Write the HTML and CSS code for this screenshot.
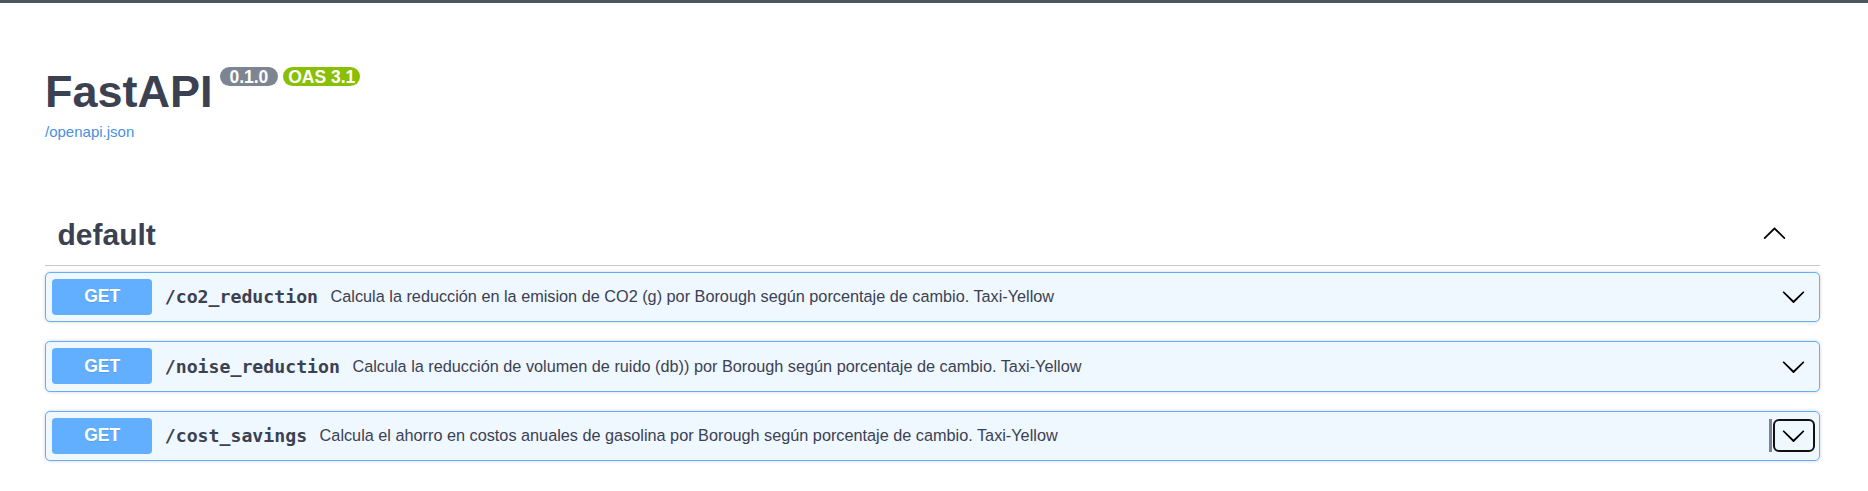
FILE: index.html
```html
<!DOCTYPE html>
<html lang="es">
<head>
<meta charset="utf-8">
<title>FastAPI - Swagger UI</title>
<link rel="stylesheet" href="styles.css">
</head>
<body>
<div class="topline"></div>
<div class="wrapper">
  <div class="info">
    <div class="main">
      <h2 class="title">FastAPI<span class="badge version"> 0.1.0 </span><span class="badge stamp">OAS 3.1</span></h2>
      <a class="url" href="#">/openapi.json</a>
    </div>
  </div>

  <section class="tag-section">
    <h3 class="tag">
      <span class="tag-name">default</span>
      <button class="expand" aria-label="collapse">
        <svg width="25" height="25" viewBox="0 0 20 20"><path d="M17.418 14.908c.272.268.709.268.979 0s.271-.701 0-.969l-7.908-7.83c-.27-.268-.707-.268-.979 0l-7.908 7.83c-.27.268-.27.701 0 .969.271.268.709.268.979 0L10 7.752l7.418 7.156z"/></svg>
      </button>
    </h3>

    <div class="opblock">
      <div class="summary">
        <span class="method">GET</span>
        <span class="path">/co2_reduction</span>
        <span class="desc">Calcula la reducción en la emision de CO2 (g) por Borough según porcentaje de cambio. Taxi-Yellow</span>
        <button class="arrow" aria-label="expand">
          <svg width="25" height="25" viewBox="0 0 20 20"><path d="M17.418 6.109c.272-.268.709-.268.979 0s.271.701 0 .969l-7.908 7.83c-.27.268-.707.268-.979 0l-7.908-7.83c-.27-.268-.27-.701 0-.969.271-.268.709-.268.979 0L10 13.25l7.418-7.141z"/></svg>
        </button>
      </div>
    </div>

    <div class="opblock">
      <div class="summary">
        <span class="method">GET</span>
        <span class="path">/noise_reduction</span>
        <span class="desc">Calcula la reducción de volumen de ruido (db)) por Borough según porcentaje de cambio. Taxi-Yellow</span>
        <button class="arrow" aria-label="expand">
          <svg width="25" height="25" viewBox="0 0 20 20"><path d="M17.418 6.109c.272-.268.709-.268.979 0s.271.701 0 .969l-7.908 7.83c-.27.268-.707.268-.979 0l-7.908-7.83c-.27-.268-.27-.701 0-.969.271-.268.709-.268.979 0L10 13.25l7.418-7.141z"/></svg>
        </button>
      </div>
    </div>

    <div class="opblock">
      <div class="summary">
        <span class="method">GET</span>
        <span class="path">/cost_savings</span>
        <span class="desc">Calcula el ahorro en costos anuales de gasolina por Borough según porcentaje de cambio. Taxi-Yellow</span>
        <span class="copy"></span>
        <button class="arrow focused" aria-label="expand">
          <svg width="25" height="25" viewBox="0 0 20 20"><path d="M17.418 6.109c.272-.268.709-.268.979 0s.271.701 0 .969l-7.908 7.83c-.27.268-.707.268-.979 0l-7.908-7.83c-.27-.268-.27-.701 0-.969.271-.268.709-.268.979 0L10 13.25l7.418-7.141z"/></svg>
        </button>
      </div>
    </div>
  </section>
</div>
</body>
</html>
```

FILE: styles.css
```css
html, body {
  margin: 0;
  padding: 0;
  background: #ffffff;
}

body {
  font-family: "Liberation Sans", Arial, sans-serif;
  color: #3b4151;
}

.topline {
  height: 3px;
  background: #4a5862;
}

.wrapper {
  padding: 0 48px 0 45px;
}

.info {
  padding: 63px 0 0;
}

.main {
  display: flex;
  flex-direction: column;
  align-items: flex-start;
}

.title {
  display: flex;
  align-items: flex-start;
  margin: 0;
  font-size: 45px;
  font-weight: 700;
  line-height: 52px;
  color: #3b4151;
}

.badge {
  display: inline-block;
  margin: 1px 0 0 6px;
  padding: 2.5px 5px;
  border-radius: 71px;
  font-size: 17.5px;
  font-weight: 700;
  line-height: 14px;
  color: #ffffff;
  white-space: pre;
}

.badge.version {
  background: #7d8492;
  margin-left: 7px;
}

.badge.stamp {
  background: #89bf04;
  margin-left: 5px;
}

.url {
  margin-top: 5px;
  font-size: 15px;
  line-height: 17px;
  color: #4990e2;
  text-decoration: none;
}

.tag-section {
  margin-top: 65px;
}

.tag {
  display: flex;
  align-items: center;
  margin: 0 0 6px;
  padding: 12.5px 25px 12.5px 12.5px;
  border-bottom: 1px solid rgba(59, 65, 81, 0.3);
  font-size: 30px;
  font-weight: 700;
  line-height: 34.5px;
  color: #3b4151;
}

.tag-name {
  flex: 1 1 auto;
}

.expand {
  display: flex;
  padding: 0 8.5px;
  margin-top: -5px;
  border: none;
  background: none;
}

.expand svg,
.arrow svg {
  display: block;
  fill: #000000;
}

.opblock {
  margin: 0 0 19px;
  border: 1px solid #61affe;
  border-radius: 5px;
  background: #eff7ff;
  box-shadow: 0 0 3.75px rgba(0, 0, 0, 0.19);
}

.summary {
  display: flex;
  align-items: center;
  padding: 6.25px;
}

.method {
  flex: 0 0 auto;
  width: 100px;
  padding: 7.5px 0;
  border-radius: 3.75px;
  background: #61affe;
  font-size: 17.5px;
  font-weight: 700;
  line-height: 21px;
  text-align: center;
  color: #ffffff;
  text-shadow: 0 1px 0 rgba(0, 0, 0, 0.1);
}

.path {
  flex: 0 0 auto;
  padding: 0 12.5px;
  font-family: "DejaVu Sans Mono", "Liberation Mono", monospace;
  font-size: 18.2px;
  font-weight: 700;
  color: #3b4151;
}

.desc {
  flex: 1 1 auto;
  font-size: 16.25px;
  color: #3b4151;
}

.copy {
  flex: 0 0 auto;
  width: 3px;
  height: 33px;
  margin-right: 3px;
  background: #7d8293;
}

.arrow {
  display: flex;
  padding: 2px 6.5px;
  border: none;
  border-radius: 4px;
  background: none;
}

.arrow.focused {
  outline: 2px solid #111111;
  outline-offset: 0;
}
```
